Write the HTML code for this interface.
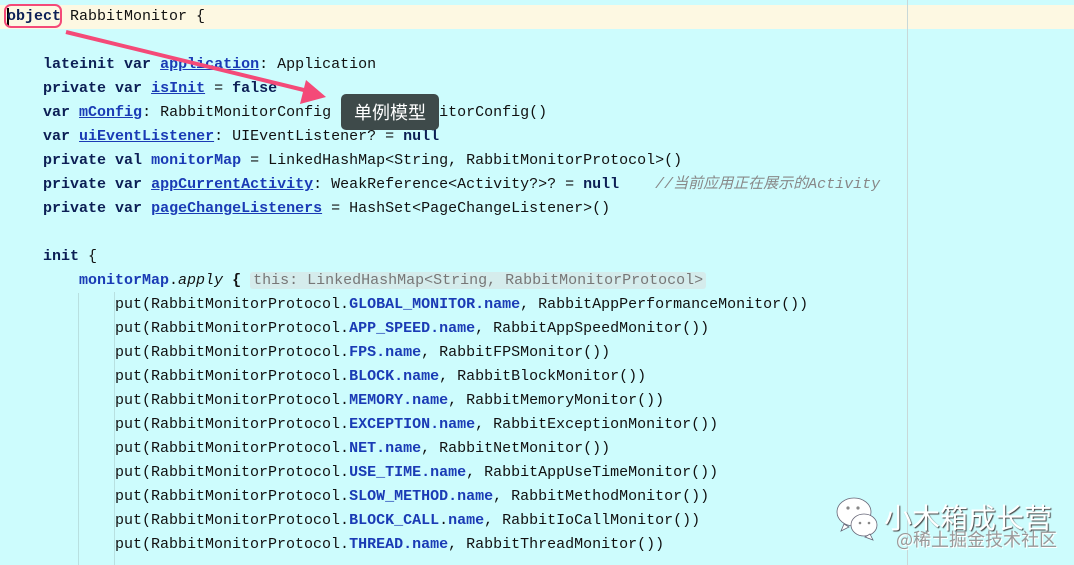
<!DOCTYPE html>
<html><head><meta charset="utf-8"><style>
body{margin:0;width:1074px;height:565px;overflow:hidden;background:#cdfcfd;position:relative;font-family:"Liberation Mono",monospace;font-size:15px;color:#111}
.l{position:absolute;left:7px;height:24px;line-height:24px;white-space:pre}
.k{color:#0c1f55;font-weight:bold}
.f{color:#1a3bb5;font-weight:bold;text-decoration:underline}
.c{color:#1a3bb5;font-weight:bold}
.cm{color:#888;font-style:italic}
.hint{background:#d5ecec;color:#777;border-radius:3px;padding:0 3px}
</style></head><body>
<div style="position:absolute;left:0;top:5px;width:1074px;height:24px;background:#fdf8e2"></div>
<div style="position:absolute;left:907px;top:0;width:1px;height:565px;background:#c8d8d8"></div>
<div style="position:absolute;left:7px;top:8px;width:2px;height:18px;background:#000"></div>
<div style="position:absolute;left:78px;top:293px;width:1px;height:272px;background:#b8e0e0"></div>
<div style="position:absolute;left:114px;top:292px;width:1px;height:273px;background:#b8e0e0"></div>
<div class="l" style="top:5px"><span class="k">object</span> RabbitMonitor {</div>
<div class="l" style="top:53px">    <span class="k">lateinit var</span> <span class="f">application</span>: Application</div>
<div class="l" style="top:77px">    <span class="k">private var</span> <span class="f">isInit</span> = <span class="k">false</span></div>
<div class="l" style="top:101px">    <span class="k">var</span> <span class="f">mConfig</span>: RabbitMonitorConfig = RabbitMonitorConfig()</div>
<div class="l" style="top:125px">    <span class="k">var</span> <span class="f">uiEventListener</span>: UIEventListener? = <span class="k">null</span></div>
<div class="l" style="top:149px">    <span class="k">private val</span> <span class="c">monitorMap</span> = LinkedHashMap&lt;String, RabbitMonitorProtocol&gt;()</div>
<div class="l" style="top:173px">    <span class="k">private var</span> <span class="f">appCurrentActivity</span>: WeakReference&lt;Activity?&gt;? = <span class="k">null</span>    <span class="cm" style="font-family:'Liberation Mono','Noto Sans CJK SC',monospace;font-size:15px">//当前应用正在展示的Activity</span></div>
<div class="l" style="top:197px">    <span class="k">private var</span> <span class="f">pageChangeListeners</span> = HashSet&lt;PageChangeListener&gt;()</div>
<div class="l" style="top:245px">    <span class="k">init</span> {</div>
<div class="l" style="top:269px">        <span class="c">monitorMap</span>.<i>apply</i> <b>{</b> <span class="hint">this: LinkedHashMap&lt;String, RabbitMonitorProtocol&gt;</span></div>
<div class="l" style="top:293px">            put(RabbitMonitorProtocol.<span class="c">GLOBAL_MONITOR.name</span>, RabbitAppPerformanceMonitor())</div>
<div class="l" style="top:317px">            put(RabbitMonitorProtocol.<span class="c">APP_SPEED.name</span>, RabbitAppSpeedMonitor())</div>
<div class="l" style="top:341px">            put(RabbitMonitorProtocol.<span class="c">FPS.name</span>, RabbitFPSMonitor())</div>
<div class="l" style="top:365px">            put(RabbitMonitorProtocol.<span class="c">BLOCK.name</span>, RabbitBlockMonitor())</div>
<div class="l" style="top:389px">            put(RabbitMonitorProtocol.<span class="c">MEMORY.name</span>, RabbitMemoryMonitor())</div>
<div class="l" style="top:413px">            put(RabbitMonitorProtocol.<span class="c">EXCEPTION.name</span>, RabbitExceptionMonitor())</div>
<div class="l" style="top:437px">            put(RabbitMonitorProtocol.<span class="c">NET.name</span>, RabbitNetMonitor())</div>
<div class="l" style="top:461px">            put(RabbitMonitorProtocol.<span class="c">USE_TIME.name</span>, RabbitAppUseTimeMonitor())</div>
<div class="l" style="top:485px">            put(RabbitMonitorProtocol.<span class="c">SLOW_METHOD.name</span>, RabbitMethodMonitor())</div>
<div class="l" style="top:509px">            put(RabbitMonitorProtocol.<span class="c">BLOCK_CALL</span>.<span class="c">name</span>, RabbitIoCallMonitor())</div>
<div class="l" style="top:533px">            put(RabbitMonitorProtocol.<span class="c">THREAD.name</span>, RabbitThreadMonitor())</div>
<div style="position:absolute;left:4px;top:4px;width:58px;height:24px;border:2.5px solid #f44a78;border-radius:7px;box-sizing:border-box"></div>
<svg style="position:absolute;left:0;top:0" width="1074" height="565"><line x1="66" y1="32" x2="312" y2="92" stroke="#f44a78" stroke-width="4"/><polygon points="326,97 306,80 300,104" fill="#f44a78"/>
<g stroke="#667" stroke-width="0.8" fill="#fff"><ellipse cx="854" cy="512" rx="17" ry="14"/><path d="M844 524 l-3 7 8-4z"/><ellipse cx="864" cy="525" rx="13" ry="11"/><path d="M870 534 l3 6-8-3z"/></g>
<g fill="#888"><circle cx="848" cy="508" r="1.6"/><circle cx="858" cy="508" r="1.6"/><circle cx="860" cy="523" r="1.3"/><circle cx="869" cy="523" r="1.3"/></g></svg>
<div style="position:absolute;left:884px;top:499px;font:28px 'Noto Sans CJK SC',sans-serif;color:#fff;text-shadow:1px 1px 1px #444;line-height:36px">小木箱成长营</div>
<div style="position:absolute;left:896px;top:528px;font:18px 'Noto Sans CJK SC',sans-serif;color:#999;text-shadow:1px 1px 0 #fff;line-height:22px">@稀土掘金技术社区</div>
<div style="position:absolute;left:341px;top:94px;width:98px;height:36px;background:#3e4a4a;border-radius:5px;color:#fff;font:18px 'Noto Sans CJK SC',sans-serif;line-height:36px;text-align:center">单例模型</div>
</body></html>
